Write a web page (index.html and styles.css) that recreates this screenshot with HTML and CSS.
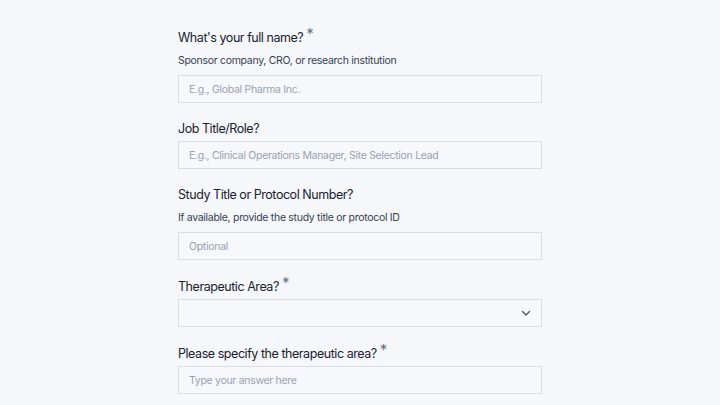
FILE: index.html
```html
<!DOCTYPE html>
<html>
<head>
<meta charset="utf-8">
<link rel="stylesheet" href="styles.css">
</head>
<body>
<form class="form">
  <div class="field">
    <label class="label">What's your full name?<span class="req">*</span></label>
    <p class="help">Sponsor company, CRO, or research institution</p>
    <div class="input"><span class="ph">E.g., Global Pharma Inc.</span></div>
  </div>
  <div class="field">
    <label class="label">Job Title/Role?</label>
    <div class="input"><span class="ph">E.g., Clinical Operations Manager, Site Selection Lead</span></div>
  </div>
  <div class="field">
    <label class="label">Study Title or Protocol Number?</label>
    <p class="help">If available, provide the study title or protocol ID</p>
    <div class="input"><span class="ph">Optional</span></div>
  </div>
  <div class="field">
    <label class="label">Therapeutic Area?<span class="req">*</span></label>
    <div class="input select">
      <span class="ph"></span>
      <svg class="chev" width="12" height="12" viewBox="0 0 12 12"><path d="M2.5 4.5 L6 8 L9.5 4.5" fill="none" stroke="#4b5563" stroke-width="1.3" stroke-linecap="round" stroke-linejoin="round"/></svg>
    </div>
  </div>
  <div class="field">
    <label class="label">Please specify the therapeutic area?<span class="req">*</span></label>
    <div class="input"><span class="ph">Type your answer here</span></div>
  </div>
</form>
</body>
</html>
```
FILE: styles.css
```css
html, body {
  margin: 0;
  padding: 0;
  background: #f5f7fa;
}
body {
  font-family: Inter, "Noto Sans", sans-serif;
  color: #1f2937;
}
.form {
  width: 364px;
  margin: 0 auto;
  padding-top: 28px;
  display: flex;
  flex-direction: column;
  gap: 17px;
}
.field {
  display: flex;
  flex-direction: column;
}
.label {
  display: block;
  font-size: 12.5px;
  line-height: 18px;
  font-weight: 400;
  letter-spacing: -0.45px;
  color: #1a2230;
  margin-bottom: 3px;
}
.req {
  color: #6b7280;
  font-size: 15px;
  position: relative;
  top: -3px;
  margin-left: 3px;
  font-weight: 400;
}
.help {
  margin: 3px 0 6px;
  font-size: 10.5px;
  line-height: 16px;
  letter-spacing: -0.3px;
  color: #374151;
}
.input {
  box-sizing: border-box;
  height: 28px;
  border: 1px solid #dadee4;
  background: #f6f8fb;
  display: flex;
  align-items: center;
  justify-content: space-between;
  padding: 0 10px;
}
.ph {
  font-size: 10.5px;
  letter-spacing: -0.3px;
  color: #9aa3af;
}
.select .chev {
  margin-right: -1px;
}
```
